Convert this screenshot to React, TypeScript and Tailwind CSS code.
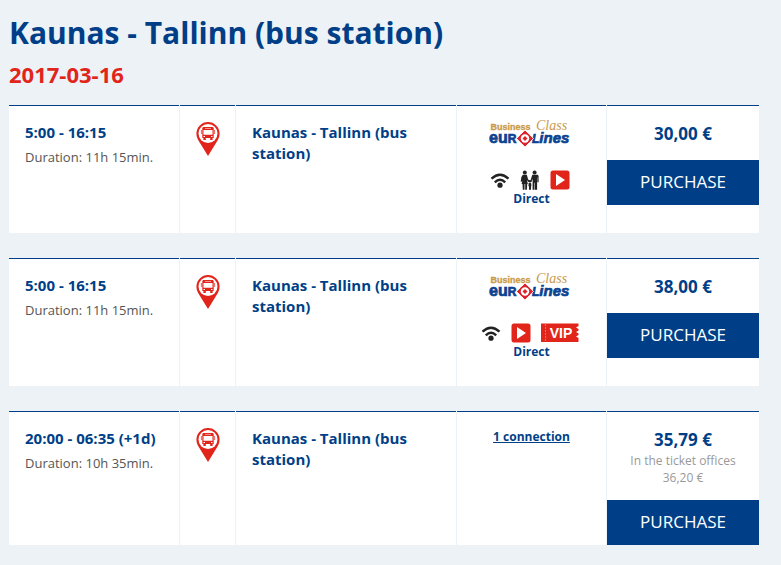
type Feature = 'wifi' | 'family' | 'video' | 'vip';

type Trip = {
  time: string;
  duration: string;
  route: string;
  features?: Feature[];
  connection?: string;
  price: string;
  officePrice?: string;
};

const trips: Trip[] = [
  {
    time: '5:00 - 16:15',
    duration: '11h 15min.',
    route: 'Kaunas - Tallinn (bus station)',
    features: ['wifi', 'family', 'video'],
    price: '30,00 €',
  },
  {
    time: '5:00 - 16:15',
    duration: '11h 15min.',
    route: 'Kaunas - Tallinn (bus station)',
    features: ['wifi', 'video', 'vip'],
    price: '38,00 €',
  },
  {
    time: '20:00 - 06:35 (+1d)',
    duration: '10h 35min.',
    route: 'Kaunas - Tallinn (bus station)',
    connection: '1 connection',
    price: '35,79 €',
    officePrice: '36,20 €',
  },
];

function BusPin() {
  return (
    <svg width="24" height="34" viewBox="0 0 24 34" aria-hidden="true">
      <path d="M12 0a11.6 11.6 0 0 0-11.6 11.6c0 4 1.600 6.400 3.600 9.400L12 34l8-13c2-3 3.600-5.400 3.600-9.400A11.600 11.600 0 0 0 12 0z" fill="#e1251b" />
      <circle cx="12" cy="11.500" r="9.500" fill="#fff" />
      <path d="M8 5h8c1.200 0 1.700.6 1.700 1.600V16H6.300V6.600C6.300 5.600 6.800 5 8 5z" fill="#e1251b" />
      <path d="M7.400 15.500h2.400V18H7.400zM14.200 15.500h2.400V18h-2.400z" fill="#e1251b" />
      <path d="M5.400 8v4M18.600 8v4" stroke="#e1251b" strokeWidth="1" opacity=".7" />
      <path d="M7.500 8h9v4.800h-9zM9 6.200h6v.6H9z" fill="#fff" />
      <path d="M7.500 13.900h1.500v1H7.500zM15 13.900h1.500v1H15z" fill="#fff" />
    </svg>
  );
}

function EurolinesLogo() {
  return (
    <svg width="82" height="27" viewBox="0 0 82 27" className="overflow-visible" role="img" aria-label="Eurolines Business Class">
      <text x="1.500" y="7.800" fill="#c99a4b" stroke="#c99a4b" strokeWidth=".3" fontFamily="'Liberation Sans', sans-serif" fontSize="9" fontWeight="700">Business</text>
      <text x="47" y="8" fill="#c99a4b" fontFamily="'Liberation Serif', serif" fontSize="14" fontStyle="italic" fontWeight="400">Class</text>
      <g fill="#0b4291" stroke="#0b4291" strokeWidth=".7" fontFamily="'Liberation Sans', sans-serif" fontWeight="700">
        <text x="0" y="21" fontSize="16">eu<tspan fontSize="12">R</tspan></text>
        <text x="43" y="21" fontSize="12" fontStyle="italic">L<tspan fontSize="15">ines</tspan></text>
      </g>
      <path d="M36 8l8.500 8.500L36 25l-8.500-8.500z" fill="#d9262e" stroke="#fff" strokeWidth=".8" />
      <circle cx="36" cy="16.500" r="5.800" fill="#d9262e" />
      <circle cx="36" cy="16.500" r="4.200" fill="#fff" />
      <path d="M36 14l2.500 2.500L36 19l-2.500-2.500z" fill="#d9262e" />
    </svg>
  );
}

function WifiIcon() {
  return (
    <svg width="20" height="20" viewBox="0 0 20 20" role="img" aria-label="Wi-Fi">
      <g fill="none" stroke="#222" strokeWidth="2.400">
        <path d="M1.500 8.600Q10 .8 18.500 8.600" />
        <path d="M4.800 12.400Q10 7.200 15.200 12.400" />
      </g>
      <circle cx="10" cy="15.200" r="2.600" fill="#222" />
    </svg>
  );
}

function FamilyIcon() {
  return (
    <svg width="20" height="20" viewBox="0 0 20 20" role="img" aria-label="Family">
      <g fill="#222">
        <circle cx="4.800" cy="2.400" r="2" />
        <circle cx="14.600" cy="2.400" r="2" />
        <path d="M2.800 4.700h4L8 9l1.400 2-.8.900L7 10.200l.8 3.800H7.200l-.3 5.800H5.200V14h-.7v5.800H2.800L2.500 14H1.600l.9-4-.6 1.800L.7 11.500 1.400 7z" />
        <path d="M12.300 4.700H17c1.100 0 1.600.5 1.600 1.600v5.900h-1.200V7.500h-.3v12.300H15V12.800h-.5v7h-1.900V8.800L11.300 12l-1.100-.5z" />
        <circle cx="9.900" cy="11.300" r="1.300" />
        <path d="M8.700 13h2.400l.4 3.200h-.5v3.600H9v-3.600h-.6z" />
      </g>
    </svg>
  );
}

function VideoIcon() {
  return (
    <svg width="20" height="20" viewBox="0 0 20 20" role="img" aria-label="Video">
      <rect x=".5" y=".5" width="19" height="19" rx="2.500" fill="#e1251b" />
      <path d="M6 4l9 6-9 6z" fill="#fff" />
    </svg>
  );
}

function VipIcon() {
  return (
    <svg width="38" height="20" viewBox="0 0 38 20" role="img" aria-label="VIP">
      <path d="M0 .5h37.500v2.500l-2.500 1.500 2.500 1.500v1.500l-2.500 1.500 2.500 1.500v1.500l-2.500 1.500 2.500 1.500v4H0z" fill="#e1251b" />
      <path d="M4.500 1.500v17" stroke="#fff" strokeWidth="1" strokeDasharray="1 2" opacity=".7" />
      <text x="20" y="15" fill="#fff" fontFamily="'Liberation Sans', sans-serif" fontSize="14" fontWeight="700" textAnchor="middle">VIP</text>
    </svg>
  );
}

const icons = {
  wifi: WifiIcon,
  family: FamilyIcon,
  video: VideoIcon,
  vip: VipIcon,
};

function TripRow({ trip }: { trip: Trip }) {
  return (
    <li className="grid min-h-32 grid-cols-[170px_55px_1fr_149px_152px] gap-px *:border-t *:border-[#003f87] *:bg-white">
      <div className="px-4 pt-4">
        <p className="text-[15px] leading-5 font-bold text-[#003f87]">{trip.time}</p>
        <p className="mt-[5px] text-[13px] leading-5 text-[#555]">Duration: {trip.duration}</p>
      </div>

      <div className="flex justify-center pt-4">
        <BusPin />
      </div>

      <div className="px-4 pt-4">
        <p className="text-[15px] leading-[21px] font-bold text-[#003f87]">{trip.route}</p>
      </div>

      <div className="flex flex-col items-center pt-4 text-[12px] leading-[18px] font-bold text-[#003f87]">
        {trip.features && (
          <>
            <div className="flex flex-col items-center gap-[21px] pr-1">
              <EurolinesLogo />
              <div className="flex gap-[10px]">
                {trip.features.map((feature) => {
                  const Icon = icons[feature];
                  return <Icon key={feature} />;
                })}
              </div>
            </div>
            <p>Direct</p>
          </>
        )}
        {trip.connection && <a href="#connection" className="underline">{trip.connection}</a>}
      </div>

      <div className="flex flex-col text-center">
        <p className="pt-4 text-[17px] leading-6 font-bold text-[#003f87]">{trip.price}</p>
        {trip.officePrice && (
          <p className="px-4 text-[12px] leading-[17px] text-[#999]">
            In the ticket offices {trip.officePrice}
          </p>
        )}
        <button type="button" className="mt-[14px] h-[45px] w-full bg-[#003f87] pb-0.5 text-[17px] text-white">
          PURCHASE
        </button>
      </div>
    </li>
  );
}

export default function App() {
  return (
    <main className="min-h-screen bg-[#edf2f6] pt-3 pr-[22px] pb-5 pl-[9px] font-['Open_Sans',sans-serif]">
      <h1 className="text-[30px] leading-[42px] font-bold text-[#003f87]">Kaunas - Tallinn (bus station)</h1>
      <h2 className="mt-1 text-[22px] leading-8 font-bold text-[#e1251b]">2017-03-16</h2>
      <ul className="mt-[15px] flex flex-col gap-[25px]">
        {trips.map((trip, i) => (
          <TripRow key={i} trip={trip} />
        ))}
      </ul>
    </main>
  );
}
